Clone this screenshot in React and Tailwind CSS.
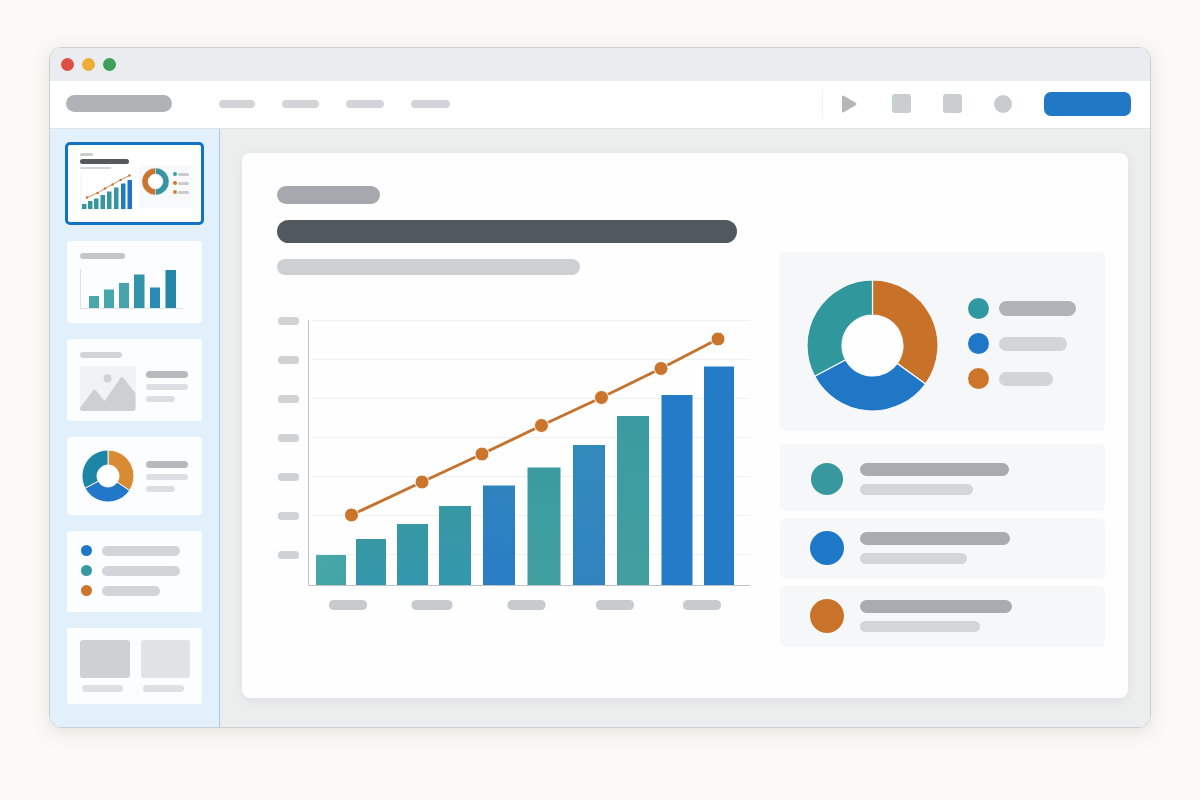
const bars = [
  { x: 39, w: 30, top: 240, fill: 'url(#tealLight)' },
  { x: 79, w: 30, top: 224, fill: 'url(#teal)' },
  { x: 120, w: 31, top: 209, fill: 'url(#teal)' },
  { x: 162, w: 32, top: 191, fill: 'url(#teal)' },
  { x: 206, w: 32, top: 170.5, fill: 'url(#blueFade)' },
  { x: 250.5, w: 33, top: 152.5, fill: 'url(#tealGreen)' },
  { x: 296, w: 32, top: 130, fill: 'url(#blueSoft)' },
  { x: 340, w: 32, top: 101, fill: 'url(#tealGreen)' },
  { x: 384.5, w: 31, top: 80, fill: '#247bc6' },
  { x: 427, w: 30, top: 51.5, fill: '#247bc6' },
]

const trend = [
  [74.5, 200],
  [145, 167],
  [205, 139],
  [264.5, 110.5],
  [324.5, 82.5],
  [384, 53.5],
  [441, 24],
]

const xLabels = [
  { x: 52, w: 38 },
  { x: 134.5, w: 41 },
  { x: 230.5, w: 38 },
  { x: 319, w: 38 },
  { x: 406, w: 38 },
]

const legend = [
  { dot: 'bg-[#2f98a0]', bar: 'w-[77px] h-[15px] bg-[#b0b4b8]' },
  { dot: 'bg-[#1f77c8]', bar: 'w-[68px] h-[14px] bg-[#d2d5d8]' },
  { dot: 'bg-[#cc752b]', bar: 'w-[54px] h-[14px] bg-[#d2d5d8]' },
]

const rows = [
  { pad: 'pt-[18px] pb-[15px]', dot: 'size-8 bg-[#37999d]', title: 'w-[149px]', sub: 'w-[113px]' },
  { pad: 'pt-[13px] pb-[14px]', dot: 'size-[34px] bg-[#1f77c8]', title: 'w-[150px]', sub: 'w-[107px]' },
  { pad: 'pt-[13px] pb-[14px]', dot: 'size-[34px] bg-[#c9732a]', title: 'w-[152px]', sub: 'w-[120px]' },
]

function Bar({ className }) {
  return <span className={`block rounded-full ${className}`}></span>
}

// Angles are in degrees, clockwise from the top
function slice(c, outer, inner, from, to) {
  const pt = (r, a) => {
    const rad = ((a - 90) * Math.PI) / 180
    return `${(c + r * Math.cos(rad)).toFixed(2)} ${(c + r * Math.sin(rad)).toFixed(2)}`
  }
  const large = to - from > 180 ? 1 : 0
  return `M${pt(outer, from)}A${outer} ${outer} 0 ${large} 1 ${pt(outer, to)}L${pt(inner, to)}A${inner} ${inner} 0 ${large} 0 ${pt(inner, from)}Z`
}

function Donut({ size, inner, slices, stroke = 1.2, hole, className }) {
  const c = size / 2
  return (
    <svg viewBox={`0 0 ${size} ${size}`} className={className} aria-hidden="true">
      <circle cx={c} cy={c} r={inner} fill={hole} />
      {slices.map((s) => (
        <path key={s.from} d={slice(c, c, inner, s.from, s.to)} fill={s.fill} stroke="#f5f8fa" strokeWidth={stroke} />
      ))}
    </svg>
  )
}

function Chart() {
  return (
    <svg viewBox="0 0 473 297" className="mt-10 w-full" role="img" aria-label="Bar chart with trend line">
      <defs>
        <linearGradient id="tealLight" x1="0" y1="0" x2="1" y2="1">
          <stop offset="0" stopColor="#4aa9a8" />
          <stop offset="1" stopColor="#41a3a4" />
        </linearGradient>
        <linearGradient id="teal" x1="0" y1="0" x2="0" y2="1">
          <stop offset="0" stopColor="#3798a3" />
          <stop offset="1" stopColor="#3497ad" />
        </linearGradient>
        <linearGradient id="tealGreen" x1="0" y1="0" x2="0" y2="1">
          <stop offset="0" stopColor="#3b9ba0" />
          <stop offset="1" stopColor="#419f9f" />
        </linearGradient>
        <linearGradient id="blueFade" x1="0" y1="0" x2="0" y2="1">
          <stop offset="0" stopColor="#2f84bf" />
          <stop offset="1" stopColor="#287dc5" />
        </linearGradient>
        <linearGradient id="blueSoft" x1="0" y1="0" x2="0" y2="1">
          <stop offset="0" stopColor="#328abb" />
          <stop offset="1" stopColor="#2f84c0" />
        </linearGradient>
      </defs>
      {[0, 1, 2, 3, 4, 5, 6].map((i) => (
        <g key={i}>
          <rect x="1" y={2 + i * 39} width="21" height="8" rx="3.5" fill="#d0d3d5" />
          <path d={`M35 ${5.5 + i * 39}H473`} stroke="#f0f1f2" />
        </g>
      ))}
      {bars.map((b) => (
        <rect key={b.x} x={b.x} y={b.top} width={b.w} height={270 - b.top} fill={b.fill} />
      ))}
      <path d="M31.5 5V270.5H473" fill="none" stroke="#bfc3c7" />
      <polyline points={trend.join(' ')} fill="none" stroke="#c5722e" strokeWidth="3" />
      {trend.map(([x, y]) => (
        <circle key={x} cx={x} cy={y} r="7" fill="#cb742b" stroke="#fff" strokeWidth="1" />
      ))}
      {xLabels.map((l) => (
        <rect key={l.x} x={l.x} y="285" width={l.w} height="10" rx="4.5" fill="#c8cbce" />
      ))}
    </svg>
  )
}

function Thumb({ label, active, className, children }) {
  return (
    <button
      type="button"
      aria-label={label}
      aria-current={active ? 'true' : undefined}
      className={`shrink-0 text-left ${active ? 'rounded-[5px] border-3 border-[#1272c3] bg-white' : 'mx-0.5 rounded-[3px] bg-[#fbfdfe]'} ${className}`}
    >
      {children}
    </button>
  )
}

function ThumbLines({ className }) {
  return (
    <span className={`flex flex-col gap-[6px] ${className}`}>
      <Bar className="w-[42px] h-[7px] bg-[#b7babd]" />
      <Bar className="w-[42px] h-[6px] bg-[#dcdfe1]" />
      <Bar className="w-[29px] h-[6px] bg-[#dcdfe1]" />
    </span>
  )
}

function Sidebar() {
  return (
    <aside className="flex w-[170px] shrink-0 flex-col gap-4 border-r border-[#a9cbe2] bg-[#e2f0fc] px-[15px] pt-[13px] pb-[23px]">
      <Thumb label="Slide 1" active className="flex h-[83px] items-start gap-[6px] pt-2 pl-3">
        <span className="flex w-[53px] flex-col gap-[3px]">
          <Bar className="w-[13px] h-[3px] bg-[#c9cccd]" />
          <Bar className="w-[49px] h-[5px] bg-[#55595c]" />
          <Bar className="w-[31px] h-[2px] bg-[#d3d6d8]" />
          <svg viewBox="0 0 53 38" className="w-full" aria-hidden="true">
            <path d="M1 1V37H53" fill="none" stroke="#e9ebec" strokeWidth="0.7" />
            {[[2, 32], [8, 29], [14, 26.5], [20.5, 23], [27, 19.5], [34, 15.5]].map(([x, y]) => (
              <rect key={x} x={x} y={y} width="4.5" height={37 - y} fill="#35989f" />
            ))}
            <rect x="41" y="11.5" width="4.5" height="25.5" fill="#247bbd" />
            <rect x="47.5" y="8" width="4.5" height="29" fill="#1f74c6" />
            <path d="M7 25.5L17.5 21L25 16.5L32.5 12.5L40.5 8L49.5 3.5" fill="none" stroke="#cf8048" strokeWidth="0.9" />
            {[[7, 25.5], [17.5, 21], [25, 16.5], [32.5, 12.5], [40.5, 8], [49.5, 3.5]].map(([x, y]) => (
              <circle key={x} cx={x} cy={y} r="1.2" fill="#c9702f" />
            ))}
          </svg>
        </span>
        <span className="mt-3 flex h-[43px] w-[54px] items-start bg-[#f8f9fa] p-[3px]">
          <Donut
            size={27}
            inner={7.5}
            stroke={0.4}
            hole="#fff"
            className="size-[27px] shrink-0"
            slices={[
              { from: 0, to: 180, fill: '#3596a2' },
              { from: 180, to: 360, fill: '#c97530' },
            ]}
          />
          <span className="mt-1 ml-1 flex flex-col gap-[5px]">
            {['bg-[#35a391]', 'bg-[#cf7a35]', 'bg-[#c9873c]'].map((c) => (
              <span key={c} className="flex items-center gap-px">
                <span className={`size-1 shrink-0 rounded-full ${c}`}></span>
                <Bar className="w-[11px] h-[3px] bg-[#c9cccf]" />
              </span>
            ))}
          </span>
        </span>
      </Thumb>

      <Thumb label="Slide 2" className="flex h-[82px] flex-col gap-[9px] pt-3 pl-[13px]">
        <Bar className="w-[45px] h-[6px] bg-[#c4c7c9]" />
        <svg viewBox="0 0 104 42" className="w-[104px]" aria-hidden="true">
          <path d="M0.5 1V40.5H103" fill="none" stroke="#dfe3e6" />
          <rect x="9" y="28" width="10" height="12" fill="#49a8a8" />
          <rect x="24" y="21.5" width="10" height="18.5" fill="#45a6ab" />
          <rect x="39" y="15" width="10" height="25" fill="#48a4ab" />
          <rect x="54" y="6.5" width="10.5" height="33.5" fill="#3393a8" />
          <rect x="70" y="19.5" width="10" height="20.5" fill="#2a8bb5" />
          <rect x="85.5" y="2" width="10.5" height="38" fill="#2386a8" />
        </svg>
      </Thumb>

      <Thumb label="Slide 3" className="flex h-[82px] flex-col gap-2 pt-[13px] pl-[13px]">
        <Bar className="w-[42px] h-[6px] bg-[#d2d4d6]" />
        <span className="flex gap-[10px]">
          <svg viewBox="0 0 56 45" className="w-14" aria-hidden="true">
            <rect width="56" height="45" rx="3" fill="#f0f2f3" />
            <circle cx="27.5" cy="12.5" r="4" fill="#cfd2d4" />
            <path d="M0 42L13 24.5Q14.5 22.5 16 24.5L24.500 35L40.5 12Q42 10 43.5 12L55.5 27.5V42Q55.5 45 52.5 45H3Q0 45 0 42Z" fill="#cdd0d2" />
          </svg>
          <ThumbLines className="mt-[5px]" />
        </span>
      </Thumb>

      <Thumb label="Slide 4" className="flex h-[78px] items-center gap-3 pl-[15px]">
        <Donut
          size={52}
          inner={11}
          stroke={1}
          hole="#fff"
          className="size-[52px]"
          slices={[
            { from: 0, to: 124, fill: '#d88b32' },
            { from: 124, to: 242, fill: '#2277c8' },
            { from: 242, to: 360, fill: '#1d86a6' },
          ]}
        />
        <ThumbLines />
      </Thumb>

      <Thumb label="Slide 5" className="flex h-[81px] flex-col gap-[9px] pt-[14px] pl-[14px]">
        {[
          ['bg-[#2277c8]', 'w-[78px]'],
          ['bg-[#37989f]', 'w-[78px]'],
          ['bg-[#cc762c]', 'w-[58px]'],
        ].map(([dot, width]) => (
          <span key={dot} className="flex items-center gap-[10px]">
            <span className={`size-[11px] rounded-full ${dot}`}></span>
            <Bar className={`h-[10px] bg-[#d2d5d7] ${width}`} />
          </span>
        ))}
      </Thumb>

      <Thumb label="Slide 6" className="flex h-[76px] items-start gap-[11px] pt-3 pl-[13px]">
        <span className="flex flex-col gap-[7px]">
          <span className="h-[38px] w-[50px] rounded-[3px] bg-[#cdd1d4]"></span>
          <Bar className="ml-0.5 h-[7px] w-[41px] bg-[#dde0e3]" />
        </span>
        <span className="flex flex-col gap-[7px]">
          <span className="h-[38px] w-[49px] rounded-[3px] bg-[#e0e3e6]"></span>
          <Bar className="ml-0.5 h-[7px] w-[41px] bg-[#dde0e3]" />
        </span>
      </Thumb>
    </aside>
  )
}

function Toolbar() {
  return (
    <header className="flex h-12 items-center border-b border-[#e0e3e5] bg-white pr-[19px] pb-0.5 pl-4">
      <Bar className="h-[17px] w-[106px] bg-[#afb3b6]" />
      <nav className="ml-[47px] flex gap-[27px]">
        <a href="#file" aria-label="File"><Bar className="h-2 w-9 bg-[#d2d4d7]" /></a>
        <a href="#edit" aria-label="Edit"><Bar className="h-2 w-[37px] bg-[#d2d4d7]" /></a>
        <a href="#view" aria-label="View"><Bar className="h-2 w-[38px] bg-[#d2d4d7]" /></a>
        <a href="#insert" aria-label="Insert"><Bar className="h-2 w-[39px] bg-[#d2d4d7]" /></a>
      </nav>
      <div className="ml-auto flex h-7 items-center gap-8 border-l border-[#f0f1f2] pl-[18px]">
        <button type="button" aria-label="Play" className="w-[19px]">
          <svg viewBox="0 0 19 18" className="w-full" aria-hidden="true">
            <path d="M1 1.8Q1 0 2.800 0.800L14.800 7.700Q16.400 9 14.800 10.300L2.800 17.200Q1 18 1 16.200Z" fill="#b4b7ba" />
          </svg>
        </button>
        <button type="button" aria-label="Layout" className="size-[19px] rounded-[3px] bg-[#cbcecf]"></button>
        <button type="button" aria-label="Notes" className="size-[19px] rounded-[3px] bg-[#cbcecf]"></button>
        <button type="button" aria-label="Account" className="size-[18px] rounded-full bg-[#c9cccd]"></button>
        <button type="button" aria-label="Share" className="h-6 w-[87px] rounded-[7px] bg-[#2178c5]"></button>
      </div>
    </header>
  )
}

function Slide() {
  return (
    <main className="flex flex-1 bg-[#eceeee] pt-6 pr-[22px] pb-[29px] pl-[22px]">
      <section className="flex flex-1 items-start gap-[29px] rounded-lg bg-[#fefefe] pt-[33px] pr-[23px] pl-[35px] shadow-[0_3px_10px_rgba(60,70,80,0.08)]">
        <div className="min-w-0 flex-1">
          <Bar className="h-[18px] w-[103px] bg-[#a5a9ad]" />
          <Bar className="mt-4 h-[23px] w-[460px] bg-[#52595e]" />
          <Bar className="mt-4 h-4 w-[303px] bg-[#cdd0d2]" />
          <Chart />
        </div>

        <div className="mt-[66px] flex w-[326px] shrink-0 flex-col">
          <div className="mb-[13px] flex h-[179px] items-start rounded-md bg-[#f6f7f9] pt-7 pl-7">
            <Donut
              size={131}
              inner={30.5}
              hole="#fefefe"
              className="size-[131px]"
              slices={[
                { from: 0, to: 126, fill: '#c87229' },
                { from: 126, to: 242, fill: '#2077c6' },
                { from: 242, to: 360, fill: '#30979c' },
              ]}
            />
            <ul className="mt-[18px] ml-[30px] flex flex-col gap-[14px]">
              {legend.map((l) => (
                <li key={l.dot} className="flex items-center gap-[10px]">
                  <span className={`size-[21px] rounded-full ${l.dot}`}></span>
                  <Bar className={l.bar} />
                </li>
              ))}
            </ul>
          </div>

          <ul className="ml-px flex flex-col gap-[7px]">
            {rows.map((r) => (
              <li key={r.title} className={`flex items-center gap-4 rounded-md bg-[#f6f7f9] pl-[30px] ${r.pad}`}>
                <span className="flex size-[34px] items-center justify-center">
                  <span className={`rounded-full ${r.dot}`}></span>
                </span>
                <span className="flex flex-col gap-2">
                  <Bar className={`h-[13px] bg-[#a8acb0] ${r.title}`} />
                  <Bar className={`h-[11px] bg-[#d3d6d9] ${r.sub}`} />
                </span>
              </li>
            ))}
          </ul>
        </div>
      </section>
    </main>
  )
}

export default function App() {
  return (
    <div className="flex min-h-screen flex-col bg-[#fbfaf6] px-[49px] pt-[47px] pb-[72px]">
      <div className="flex flex-1 flex-col overflow-hidden rounded-xl border border-[#cbd0d4] shadow-[0_4px_20px_rgba(60,60,50,0.13)]">
        <div className="flex h-[33px] items-center gap-2 bg-[#e9edf0] pl-[11px]">
          <button type="button" aria-label="Close" className="size-[13px] rounded-full bg-[#df5044]"></button>
          <button type="button" aria-label="Minimize" className="size-[13px] rounded-full bg-[#eeac38]"></button>
          <button type="button" aria-label="Zoom" className="size-[13px] rounded-full bg-[#419f5a]"></button>
        </div>
        <Toolbar />
        <div className="flex flex-1">
          <Sidebar />
          <Slide />
        </div>
      </div>
    </div>
  )
}
